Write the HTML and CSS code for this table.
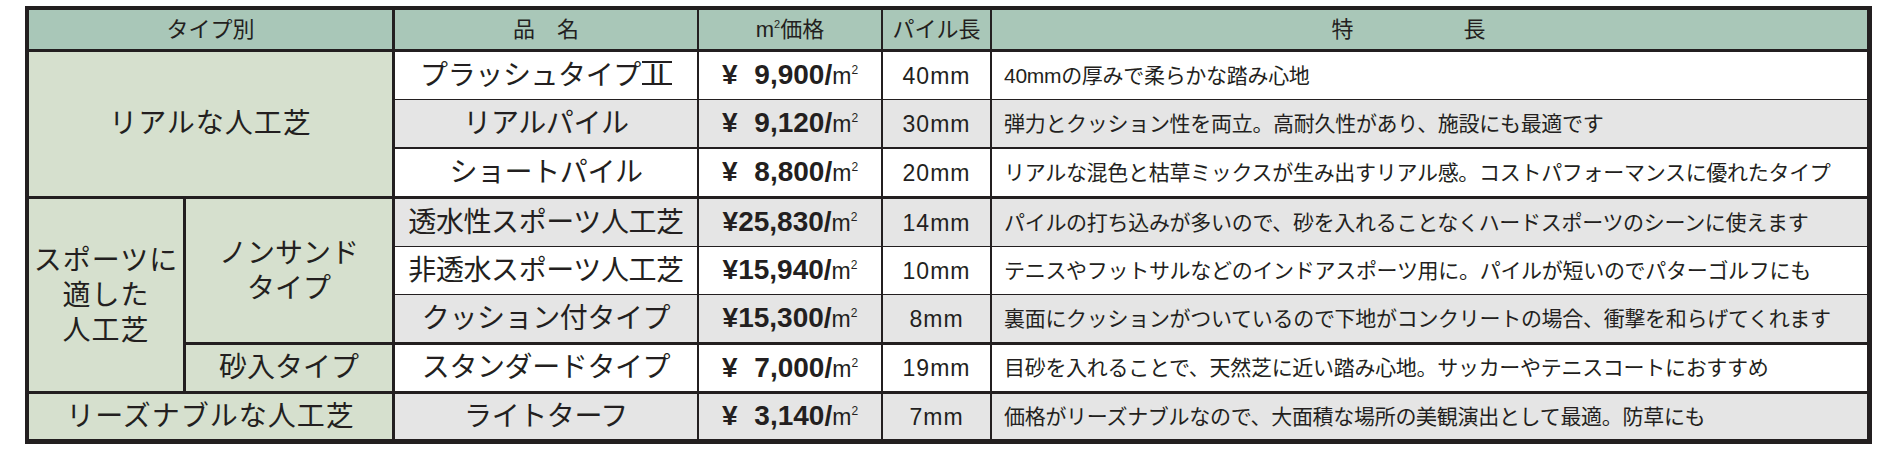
FILE: index.html
```html
<!DOCTYPE html>
<html lang="ja">
<head>
<meta charset="utf-8">
<title>人工芝 価格表</title>
<link rel="stylesheet" href="styles.css">
</head>
<body>
<div class="wrap">
<table class="turf">
<colgroup>
<col class="c-a"><col class="c-b"><col class="c-name"><col class="c-price"><col class="c-pile"><col class="c-feat">
</colgroup>
<thead>
<tr class="r-head">
<th colspan="2" class="vr3">タイプ別</th>
<th class="vr1">品　名</th>
<th class="vr1">m<sup class="hsup">2</sup>価格</th>
<th class="vr1">パイル長</th>
<th class="h-feat">特　　　　　長</th>
</tr>
</thead>
<tbody>
<tr class="r1 b1 white">
<td colspan="2" rowspan="3" class="type vr3 s3">リアルな人工芝</td>
<td class="name vr1">プラッシュタイプ<span class="roman">Ⅱ</span></td>
<td class="price vr1"><b>¥<span class="fig"></span>9,900/</b><span class="unit">m<sup>2</sup></span></td>
<td class="pile vr1">40mm</td>
<td class="feat">40mmの厚みで柔らかな踏み心地</td>
</tr>
<tr class="r2 b2 gray">
<td class="name vr1">リアルパイル</td>
<td class="price vr1"><b>¥<span class="fig"></span>9,120/</b><span class="unit">m<sup>2</sup></span></td>
<td class="pile vr1">30mm</td>
<td class="feat">弾力とクッション性を両立。高耐久性があり、施設にも最適です</td>
</tr>
<tr class="r3 b3 white">
<td class="name vr1">ショートパイル</td>
<td class="price vr1"><b>¥<span class="fig"></span>8,800/</b><span class="unit">m<sup>2</sup></span></td>
<td class="pile vr1">20mm</td>
<td class="feat">リアルな混色と枯草ミックスが生み出すリアル感。コストパフォーマンスに優れたタイプ</td>
</tr>
<tr class="r4 b1 gray">
<td rowspan="4" class="type multi vr3 s3">スポーツに<br>適した<br>人工芝</td>
<td rowspan="3" class="sub multi vr3 s3">ノンサンド<br>タイプ</td>
<td class="name vr1">透水性スポーツ人工芝</td>
<td class="price vr1"><b>¥25,830/</b><span class="unit">m<sup>2</sup></span></td>
<td class="pile vr1">14mm</td>
<td class="feat">パイルの打ち込みが多いので、砂を入れることなくハードスポーツのシーンに使えます</td>
</tr>
<tr class="r5 b1 white">
<td class="name vr1">非透水スポーツ人工芝</td>
<td class="price vr1"><b>¥15,940/</b><span class="unit">m<sup>2</sup></span></td>
<td class="pile vr1">10mm</td>
<td class="feat">テニスやフットサルなどのインドアスポーツ用に。パイルが短いのでパターゴルフにも</td>
</tr>
<tr class="r6 b3 gray">
<td class="name vr1">クッション付タイプ</td>
<td class="price vr1"><b>¥15,300/</b><span class="unit">m<sup>2</sup></span></td>
<td class="pile vr1">8mm</td>
<td class="feat">裏面にクッションがついているので下地がコンクリートの場合、衝撃を和らげてくれます</td>
</tr>
<tr class="r7 b3 white">
<td class="sub vr3">砂入タイプ</td>
<td class="name vr1">スタンダードタイプ</td>
<td class="price vr1"><b>¥<span class="fig"></span>7,000/</b><span class="unit">m<sup>2</sup></span></td>
<td class="pile vr1">19mm</td>
<td class="feat">目砂を入れることで、天然芝に近い踏み心地。サッカーやテニスコートにおすすめ</td>
</tr>
<tr class="r8 gray">
<td colspan="2" class="type vr3">リーズナブルな人工芝</td>
<td class="name vr1">ライトターフ</td>
<td class="price vr1"><b>¥<span class="fig"></span>3,140/</b><span class="unit">m<sup>2</sup></span></td>
<td class="pile vr1">7mm</td>
<td class="feat">価格がリーズナブルなので、大面積な場所の美観演出として最適。防草にも</td>
</tr>
</tbody>
</table>
</div>
</body>
</html>
```

FILE: styles.css
```css
* { box-sizing: border-box; }
html, body { margin: 0; padding: 0; background: #ffffff; }
body {
  font-family: "Liberation Sans", "Noto Sans CJK JP", sans-serif;
  color: #231f20;
}
.wrap { padding: 6px 0 0 25px; }

.turf {
  border-collapse: separate;
  border-spacing: 0;
  table-layout: fixed;
  width: 1847px;
  border-style: solid;
  border-color: #231f20;
  border-width: 4px 5px 5px 4px;
}
.c-a { width: 157px; }
.c-b { width: 209px; }
.c-name { width: 304px; }
.c-price { width: 184px; }
.c-pile { width: 109px; }
.c-feat { width: 875px; }

.turf th, .turf td {
  padding: 0;
  text-align: center;
  vertical-align: middle;
  font-weight: 400;
  border: 0 solid #231f20;
  white-space: nowrap;
}

/* row heights */
.r-head { height: 42px; }
.r1 { height: 48px; }
.r2 { height: 49px; }
.r3 { height: 50px; }
.r4 { height: 48px; }
.r5 { height: 48px; }
.r6 { height: 50px; }
.r7 { height: 49px; }
.r8 { height: 45px; }

/* horizontal rules */
.r-head > th { border-bottom-width: 3px; }
tr.b1 > td { border-bottom-width: 1px; }
tr.b2 > td { border-bottom-width: 2px; }
tr.b3 > td { border-bottom-width: 3px; }
.turf td.s3 { border-bottom-width: 3px; }

/* vertical rules */
.vr3 { border-right-width: 3px !important; }
.vr1 { border-right-width: 2px !important; }

/* header */
.r-head th {
  background: #a9c7b8;
  font-size: 22px;
  line-height: 26px;
}
.r-head .h-feat { padding-right: 42px; }
.hsup {
  font-size: 11px;
  vertical-align: 9px;
  line-height: 0;
}

/* backgrounds */
tr.white > td { background: #ffffff; }
tr.gray > td { background: #e5e5e5; }
.turf td.type, .turf td.sub { background: #d6e0ce; }

/* type column */
.turf td.type {
  font-size: 28px;
  line-height: 34px;
  letter-spacing: 1px;
}
.turf td.sub {
  font-size: 28px;
  line-height: 34px;
}
.turf td.multi { line-height: 35px; }

/* product name */
.turf td.name {
  font-size: 28px;
  line-height: 34px;
  letter-spacing: -0.4px;
}
.roman {
  display: inline-block;
  font-family: "Noto Sans CJK JP", sans-serif;
  letter-spacing: 0;
  line-height: 0.74em;
  padding: 0 1px;
  margin-left: 1px;
  border-top: 2px solid #231f20;
  border-bottom: 2px solid #231f20;
}

/* price */
.price {
  font-size: 28px;
  line-height: 34px;
}
.price b { font-weight: 700; }
.fig { display: inline-block; width: 0.6em; }
.unit { font-size: 23px; font-weight: 400; }
.unit sup {
  font-size: 12px;
  vertical-align: 10px;
  line-height: 0;
}

/* pile */
.pile {
  font-size: 23px;
  line-height: 28px;
  letter-spacing: 1px;
}

/* features */
.turf td.feat {
  text-align: left;
  padding-left: 12px;
  font-size: 21px;
  line-height: 28px;
  letter-spacing: -0.3px;
}
```
